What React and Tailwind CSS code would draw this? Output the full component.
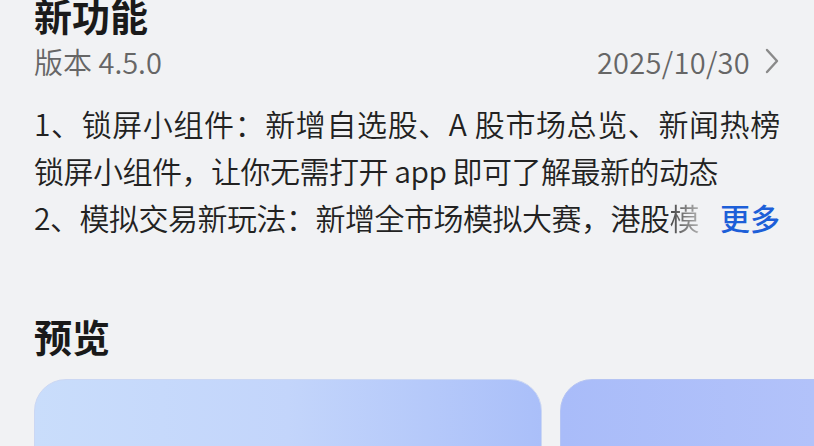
import React from "react";

const font = { fontFamily: '"Noto Sans CJK SC", "Noto Sans", sans-serif' };

export default function App() {
  return (
    <div
      className="w-[814px] h-[446px] overflow-hidden bg-[#f1f2f4] px-[34px] flex flex-col"
      style={font}
    >
      <div className="mt-[-7px] text-[38px] leading-[44px] font-bold text-[#1a1a1a]">
        新功能
      </div>
      <div className="mt-[6px] flex items-center justify-between text-[29px] leading-[36px] font-[350] text-[#666666]">
        <span>版本 4.5.0</span>
        <span className="flex items-center">
          <span className="text-[29px] tracking-[0.3px]">2025/10/30</span>
          <svg
            width="16"
            height="26"
            viewBox="0 0 16 26"
            className="ml-[14px]"
            fill="none"
            stroke="#8a8a8a"
            strokeWidth="2.4"
            strokeLinecap="round"
            strokeLinejoin="round"
          >
            <path d="M3 2 L13 13 L3 24" />
          </svg>
        </span>
      </div>
      <div className="mt-[21px] text-[30px] leading-[47px] font-[350] text-[#222222]">
        <div className="whitespace-nowrap tracking-[0.6px]">1、锁屏小组件：新增自选股、A 股市场总览、新闻热榜</div>
        <div className="whitespace-nowrap tracking-[-0.5px]">锁屏小组件，让你无需打开 app 即可了解最新的动态</div>
        <div className="flex justify-between whitespace-nowrap">
          <span className="tracking-[-0.5px]">
            2、模拟交易新玩法：新增全市场模拟大赛，港股
            <span className="bg-gradient-to-r from-[#444444] to-[#b0b0b0] bg-clip-text text-transparent">
              模
            </span>
          </span>
          <span className="text-[#1d5fd8] font-medium">更多</span>
        </div>
      </div>
      <div className="mt-[73px] text-[38px] leading-[44px] font-bold text-[#1a1a1a]">
        预览
      </div>
      <div className="mt-[21px] flex gap-[18px]">
        <div className="shrink-0 w-[508px] h-[220px] rounded-[32px] border border-[#cbd7f3] bg-gradient-to-r from-[#c9ddfb] via-[#c3d5fb] to-[#aabff9]" />
        <div className="shrink-0 w-[508px] h-[220px] rounded-[32px] border border-[#b5c4f3] bg-gradient-to-r from-[#a9bcf9] via-[#b2c2fa] to-[#c0cbf8]" />
      </div>
    </div>
  );
}
